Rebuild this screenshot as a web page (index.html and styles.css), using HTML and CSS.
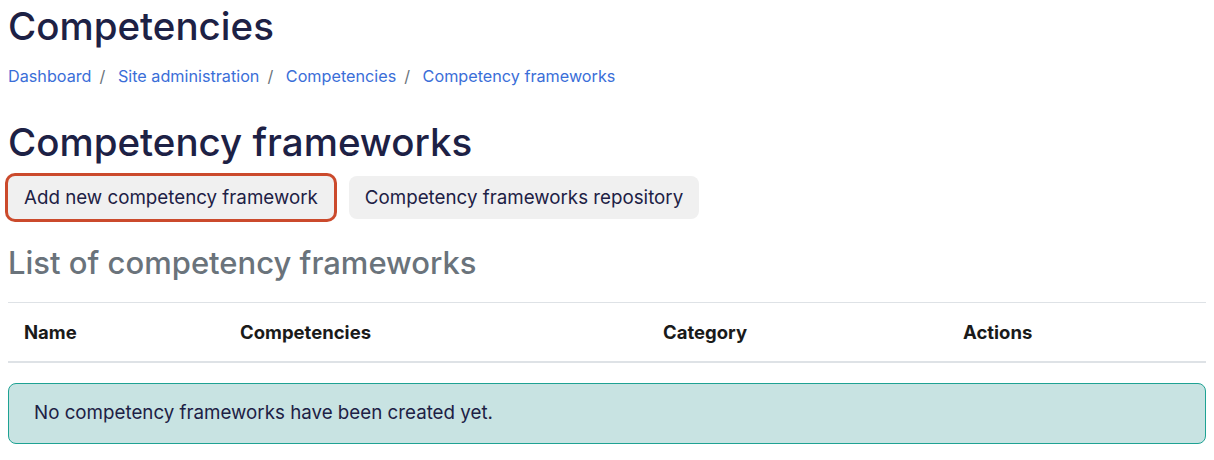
FILE: index.html
```html
<!DOCTYPE html>
<html lang="en">
<head>
    <title>Competency frameworks</title>
    <link rel="stylesheet" href="styles.css">
</head>
<body>
    <div class="page">
        <h1 class="page-title">Competencies</h1>
        <nav class="breadcrumb">
            <a href="#">Dashboard</a><span class="sep">/</span>
            <a href="#">Site administration</a><span class="sep">/</span>
            <a href="#">Competencies</a><span class="sep">/</span>
            <a href="#">Competency frameworks</a>
        </nav>

        <h2 class="section-title">Competency frameworks</h2>
        <div class="actions">
            <button class="btn btn-focus">Add new competency framework</button>
            <button class="btn">Competency frameworks repository</button>
        </div>

        <h3 class="list-title">List of competency frameworks</h3>
        <table class="frameworks">
            <thead>
                <tr>
                    <th class="col-name">Name</th>
                    <th class="col-comp">Competencies</th>
                    <th class="col-cat">Category</th>
                    <th class="col-act">Actions</th>
                </tr>
            </thead>
        </table>

        <div class="alert">No competency frameworks have been created yet.</div>
    </div>
</body>
</html>
```

FILE: styles.css
```css
body {
    font-family: Inter, 'Noto Sans', Arial, sans-serif;
    background: #fff;
    color: #1d2145;
    margin: 0;
    padding: 0;
}
.page {
    padding: 0 8px;
}
.page-title {
    font-size: 38.5px;
    font-weight: 500;
    line-height: 48px;
    margin: 2px 0 0;
    color: #1d2145;
}
.breadcrumb {
    margin-top: 14px;
    font-size: 16.2px;
    line-height: 24px;
}
.breadcrumb a {
    color: #3a6ed8;
    text-decoration: none;
}
.breadcrumb .sep {
    color: #6a737b;
    padding: 0 8px;
}
.section-title {
    font-size: 38.5px;
    font-weight: 500;
    line-height: 48px;
    margin: 30px 0 0;
    color: #1d2145;
}
.actions {
    display: flex;
    gap: 15px;
    margin-top: 10px;
}
.btn {
    font-family: inherit;
    font-size: 18.75px;
    color: #1d2145;
    background: #f0f0f0;
    border: none;
    border-radius: 8px;
    padding: 0 16px;
    height: 43px;
    cursor: pointer;
}
/* keyboard focus ring on the first action */
.btn-focus {
    box-shadow: 0 0 0 3px #cb4a2c;
    border-radius: 7px;
}
.list-title {
    font-size: 31px;
    font-weight: 500;
    line-height: 40px;
    margin: 24px 0 0;
    color: #6a737b;
}
.frameworks {
    width: 100%;
    border-collapse: collapse;
    margin-top: 19px;
}
.frameworks th {
    text-align: left;
    font-size: 18.5px;
    font-weight: 700;
    color: #1a1a1a;
    padding: 18px 16px;
    border-top: 1px solid #dee2e6;
    border-bottom: 2px solid #dee2e6;
}
.col-name { width: 184px; }
.col-comp { width: 391px; }
.col-cat { width: 268px; }
.alert {
    margin-top: 20px;
    background: #c8e3e2;
    border: 1px solid #1ea293;
    border-radius: 8px;
    padding: 17px 25px 18px;
    font-size: 18.75px;
    line-height: 24px;
    color: #1d2145;
}
```
